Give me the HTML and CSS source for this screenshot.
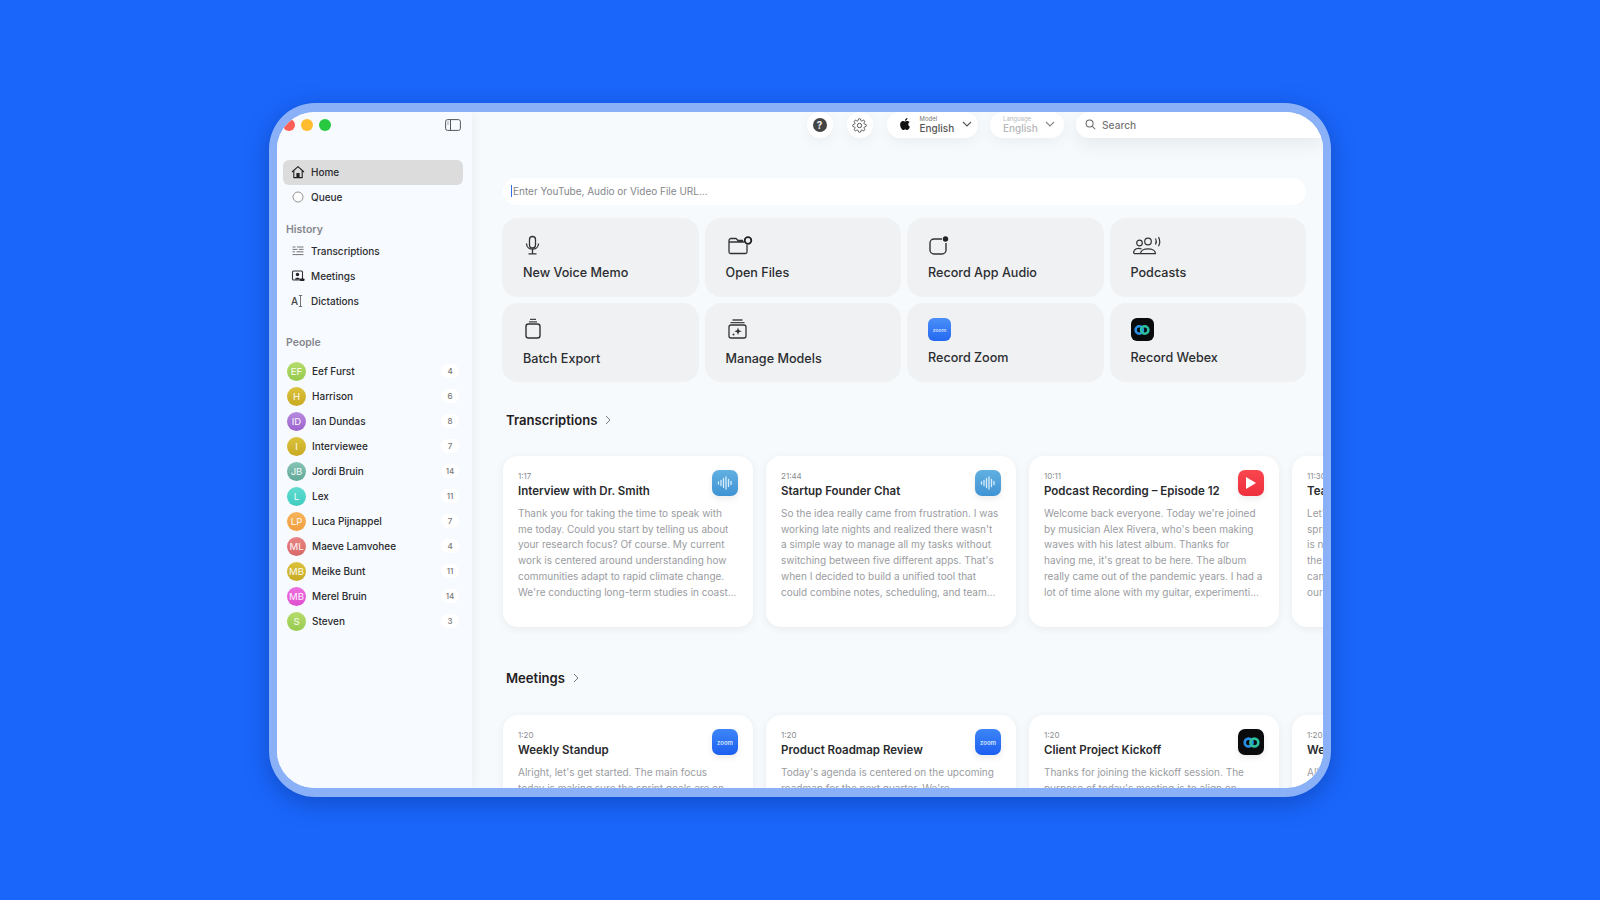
FILE: index.html
```html
<!DOCTYPE html>
<html lang="en">

<head>
    <meta charset="UTF-8" />
    <meta name="viewport" content="width=device-width, initial-scale=1.0" />
    <title>Transcriptions</title>
    <link rel="stylesheet" href="styles.css">
</head>

<body>
    <div class="window">
        <aside class="sidebar">
            <div class="titlebar">
                <span class="light light-red"></span>
                <span class="light light-yellow"></span>
                <span class="light light-green"></span>
                <svg class="toggle" viewBox="0 0 16 12" width="16" height="12"><rect x=".6" y=".6" width="14.8" height="10.8" rx="2" fill="none" stroke="#555" stroke-width="1"/><path d="M5.5 .6v10.8" stroke="#555"/><path d="M2.2 3h1.6M2.2 5h1.6" stroke="#777" stroke-width=".8"/></svg>
            </div>

            <a class="nav-row active">
                <svg class="nav-icon" viewBox="0 0 14 14"><path d="M1 7 7 1.6 13 7M2.8 5.8V12.6h8.4V5.8" fill="none" stroke="#222" stroke-width="1.1" stroke-linejoin="round"/><rect x="5.4" y="8" width="3.2" height="4.6" fill="#222"/></svg>
                Home
            </a>
            <a class="nav-row">
                <svg class="nav-icon" viewBox="0 0 14 14"><circle cx="7" cy="7" r="5" fill="#fff" stroke="#888" stroke-width=".9"/></svg>
                Queue
            </a>

            <h4 class="side-heading history-heading">History</h4>
            <a class="nav-row">
                <svg class="nav-icon" viewBox="0 0 14 14"><path d="M1.5 3h3M6 3h6.5M1.5 5.4h5M8 5.4h4.500M1.500 7.800h2.500M5.500 7.800h7M1.500 10.600h11" fill="none" stroke="#666" stroke-width=".9"/></svg>
                Transcriptions
            </a>
            <a class="nav-row">
                <svg class="nav-icon" viewBox="0 0 14 14"><rect x="1.500" y="2" width="10" height="9" rx="1" fill="none" stroke="#333" stroke-width="1.100"/><circle cx="6.500" cy="5.500" r="1.700" fill="#222"/><path d="M3.800 10.500c.3-2.300 5-2.300 5.400 0z" fill="#222"/><rect x="9" y="9.500" width="4.500" height="2.500" rx=".8" fill="#222"/></svg>
                Meetings
            </a>
            <a class="nav-row">
                <span class="nav-icon dict-icon"><span>A</span><svg viewBox="0 0 5 14" width="5" height="14"><path d="M.8 1.500h3.400M2.500 1.500v11M.8 12.500h3.400" fill="none" stroke="#555" stroke-width=".8"/></svg></span>
                Dictations
            </a>

            <h4 class="side-heading people-heading">People</h4>
            <ul class="people">
                <li><span class="avatar av-lime">EF</span><span class="person">Eef Furst</span><span class="count">4</span></li>
                <li><span class="avatar av-mustard">H</span><span class="person">Harrison</span><span class="count">6</span></li>
                <li><span class="avatar av-purple">ID</span><span class="person">Ian Dundas</span><span class="count">8</span></li>
                <li><span class="avatar av-mustard">I</span><span class="person">Interviewee</span><span class="count">7</span></li>
                <li><span class="avatar av-sage">JB</span><span class="person">Jordi Bruin</span><span class="count">14</span></li>
                <li><span class="avatar av-teal">L</span><span class="person">Lex</span><span class="count">11</span></li>
                <li><span class="avatar av-orange">LP</span><span class="person">Luca Pijnappel</span><span class="count">7</span></li>
                <li><span class="avatar av-red">ML</span><span class="person">Maeve Lamvohee</span><span class="count">4</span></li>
                <li><span class="avatar av-mustard">MB</span><span class="person">Meike Bunt</span><span class="count">11</span></li>
                <li><span class="avatar av-pink">MB</span><span class="person">Merel Bruin</span><span class="count">14</span></li>
                <li><span class="avatar av-lime">S</span><span class="person">Steven</span><span class="count">3</span></li>
            </ul>
        </aside>

        <main class="content">
            <div class="topbar">
                <div class="round-btn"><span class="help">?</span></div>
                <div class="round-btn">
                    <svg viewBox="0 0 24 24" width="15" height="15" fill="none" stroke="#555" stroke-width="1.600"><circle cx="12" cy="12" r="3.500"/><path d="M19.400 15a1.650 1.650 0 0 0 .33 1.820l.06.06a2 2 0 0 1 0 2.830 2 2 0 0 1-2.830 0l-.06-.06a1.650 1.650 0 0 0-1.820-.33 1.650 1.650 0 0 0-1 1.510V21a2 2 0 0 1-2 2 2 2 0 0 1-2-2v-.09A1.650 1.650 0 0 0 9 19.400a1.650 1.650 0 0 0-1.820.33l-.06.06a2 2 0 0 1-2.830 0 2 2 0 0 1 0-2.830l.06-.06a1.650 1.650 0 0 0 .33-1.820 1.650 1.650 0 0 0-1.510-1H3a2 2 0 0 1-2-2 2 2 0 0 1 2-2h.09A1.650 1.650 0 0 0 4.600 9a1.650 1.650 0 0 0-.33-1.820l-.06-.06a2 2 0 0 1 0-2.830 2 2 0 0 1 2.830 0l.06.06a1.650 1.650 0 0 0 1.820.33H9a1.650 1.650 0 0 0 1-1.510V3a2 2 0 0 1 2-2 2 2 0 0 1 2 2v.09a1.650 1.650 0 0 0 1 1.510 1.650 1.650 0 0 0 1.820-.33l.06-.06a2 2 0 0 1 2.830 0 2 2 0 0 1 0 2.830l-.06.06a1.650 1.650 0 0 0-.33 1.820V9a1.650 1.650 0 0 0 1.510 1H21a2 2 0 0 1 2 2 2 2 0 0 1-2 2h-.09a1.650 1.650 0 0 0-1.510 1z"/></svg>
                </div>
                <div class="picker model-picker">
                    <svg class="apple" viewBox="0 0 24 24" width="12" height="12"><path fill="#111" d="M12.152 6.896c-.948 0-2.415-1.078-3.960-1.040-2.040.027-3.910 1.183-4.961 3.014-2.117 3.675-.546 9.103 1.519 12.090 1.013 1.454 2.208 3.090 3.792 3.039 1.520-.065 2.090-.987 3.935-.987 1.831 0 2.350.987 3.960.948 1.637-.026 2.676-1.480 3.676-2.948 1.156-1.688 1.636-3.325 1.662-3.415-.039-.013-3.182-1.221-3.220-4.857-.026-3.040 2.480-4.494 2.597-4.559-1.429-2.090-3.623-2.324-4.390-2.376-2-.156-3.675 1.090-4.610 1.090zM15.530 3.830c.843-1.012 1.400-2.427 1.245-3.830-1.207.052-2.662.805-3.532 1.818-.780.896-1.454 2.338-1.273 3.714 1.338.104 2.715-.688 3.559-1.701"/></svg>
                    <div class="picker-text"><small>Model</small><b>English</b></div>
                    <svg class="caret-down" viewBox="0 0 10 6" width="10" height="6"><path d="M1 1l4 4 4-4" fill="none" stroke="#555" stroke-width="1.100"/></svg>
                </div>
                <div class="picker lang-picker">
                    <div class="picker-text"><small>Language</small><b>English</b></div>
                    <svg class="caret-down" viewBox="0 0 10 6" width="10" height="6"><path d="M1 1l4 4 4-4" fill="none" stroke="#888" stroke-width="1.100"/></svg>
                </div>
                <div class="search">
                    <svg viewBox="0 0 12 12" width="11" height="11"><circle cx="5" cy="5" r="3.800" fill="none" stroke="#666" stroke-width="1.100"/><path d="M8 8l3.200 3.200" stroke="#666" stroke-width="1.100"/></svg>
                    Search
                </div>
            </div>

            <div class="url-box"><span class="text-cursor"></span>Enter YouTube, Audio or Video File URL...</div>

            <div class="tiles">
                <div class="tile">
                    <svg class="tile-icon" viewBox="0 0 32 24"><rect x="6.500" y="3.500" width="6" height="11.500" rx="3" fill="none" stroke="#333" stroke-width="1.300"/><path d="M3.500 10.500c0 7.500 12 7.500 12 0M9.500 16.500v4M5.500 20.800h8" fill="none" stroke="#333" stroke-width="1.300"/></svg>
                    <span>New Voice Memo</span>
                </div>
                <div class="tile">
                    <svg class="tile-icon" viewBox="0 0 32 24"><path d="M18 9H3v-1.500a2 2 0 0 1 2-2h5l2 2h5M3 8v11a1.500 1.500 0 0 0 1.500 1.500h15a1.500 1.500 0 0 0 1.500-1.500v-7" fill="none" stroke="#333" stroke-width="1.300"/><circle cx="22" cy="7.500" r="3.300" fill="none" stroke="#222" stroke-width="1.800"/></svg>
                    <span>Open Files</span>
                </div>
                <div class="tile">
                    <svg class="tile-icon" viewBox="0 0 32 24"><path d="M14 6H6a4 4 0 0 0-4 4v7a4 4 0 0 0 4 4h8a4 4 0 0 0 4-4v-7" fill="none" stroke="#333" stroke-width="1.400"/><circle cx="17.500" cy="6" r="2.700" fill="#222"/></svg>
                    <span>Record App Audio</span>
                </div>
                <div class="tile">
                    <svg class="tile-icon" viewBox="0 0 32 24"><circle cx="8.500" cy="10" r="2.800" fill="none" stroke="#333" stroke-width="1.200"/><path d="M2.500 20.500c0-5 5-6 8-4.500M3 20.700h6" fill="none" stroke="#333" stroke-width="1.200"/><circle cx="17" cy="8.500" r="3.300" fill="none" stroke="#333" stroke-width="1.200"/><path d="M9.500 20.700c0-6.500 15-6.500 15 0z" fill="none" stroke="#333" stroke-width="1.200"/><path d="M24.500 5.500c1 1.800 1 4.200 0 6M27.500 4c1.500 2.800 1.500 6.500 0 9.300" fill="none" stroke="#333" stroke-width="1.200"/></svg>
                    <span>Podcasts</span>
                </div>
                <div class="tile tile-low">
                    <svg class="tile-icon" viewBox="0 0 32 24"><rect x="3" y="6" width="14" height="14" rx="2.500" fill="none" stroke="#333" stroke-width="1.400"/><path d="M6 3.800h8M7 1.300h6" stroke="#444" stroke-width="1.300"/></svg>
                    <span>Batch Export</span>
                </div>
                <div class="tile tile-low">
                    <svg class="tile-icon" viewBox="0 0 32 24"><rect x="3" y="7" width="17" height="13" rx="2" fill="none" stroke="#333" stroke-width="1.300"/><path d="M4.500 4.700h14M6.500 2h10" stroke="#444" stroke-width="1.300"/><path d="M12 9.500l1 2.700 2.700 1-2.700 1-1 2.700-1-2.700-2.700-1 2.700-1z" fill="#333"/><circle cx="7.500" cy="16.500" r="1" fill="#333"/></svg>
                    <span>Manage Models</span>
                </div>
                <div class="tile tile-app">
                    <div class="app-icon app-zoom"><span>zoom</span></div>
                    <span>Record Zoom</span>
                </div>
                <div class="tile tile-app">
                    <div class="app-icon app-webex">
                        <svg viewBox="0 0 16 12" width="16" height="12"><circle cx="5.300" cy="6" r="3.700" fill="none" stroke="#2a8fe4" stroke-width="2.500"/><circle cx="10.700" cy="6" r="3.700" fill="none" stroke="#2cc0a0" stroke-width="2.500"/></svg>
                    </div>
                    <span>Record Webex</span>
                </div>
            </div>

            <div class="section-title first"><span>Transcriptions</span><svg viewBox="0 0 6 10" width="6" height="10"><path d="M1 1l4 4-4 4" fill="none" stroke="#777" stroke-width="1"/></svg></div>
            <div class="cards">
                <article class="card">
                    <div class="card-badge badge-wave"><svg viewBox="0 0 16 14" width="16" height="14"><path d="M1.500 6v2M4 4.500v5M6.500 2.500v9M9 1v12M11.500 3.500v7M14 5.500v3" stroke="#d9eefa" stroke-width="1.300" stroke-linecap="round"/></svg></div>
                    <time>1:17</time>
                    <h5>Interview with Dr. Smith</h5>
                    <p>Thank you for taking the time to speak with me today. Could you start by telling us about your research focus? Of course. My current work is centered around understanding how communities adapt to rapid climate change. We're conducting long-term studies in coastal regions across three different countries right now.</p>
                </article>
                <article class="card">
                    <div class="card-badge badge-wave"><svg viewBox="0 0 16 14" width="16" height="14"><path d="M1.500 6v2M4 4.500v5M6.500 2.500v9M9 1v12M11.500 3.500v7M14 5.500v3" stroke="#d9eefa" stroke-width="1.300" stroke-linecap="round"/></svg></div>
                    <time>21:44</time>
                    <h5>Startup Founder Chat</h5>
                    <p>So the idea really came from frustration. I was working late nights and realized there wasn't a simple way to manage all my tasks without switching between five different apps. That's when I decided to build a unified tool that could combine notes, scheduling, and team communication in a single place for everyone.</p>
                </article>
                <article class="card">
                    <div class="card-badge badge-play"><svg viewBox="0 0 12 14" width="12" height="14"><path d="M1 1l10 6-10 6z" fill="#fff"/></svg></div>
                    <time>10:11</time>
                    <h5>Podcast Recording – Episode 12</h5>
                    <p>Welcome back everyone. Today we're joined by musician Alex Rivera, who's been making waves with his latest album. Thanks for having me, it's great to be here. The album really came out of the pandemic years. I had a lot of time alone with my guitar, experimenting with sounds I never tried before that.</p>
                </article>
                <article class="card">
                    <time>11:30</time>
                    <h5>Team Sync</h5>
                    <p>Let's go over where we are on this week's<br>sprint. The main thing to watch this week<br>is now the release, so we need to make sure<br>the last tasks are done before Friday. If you<br>can, please share an update in the channel<br>our team uses for launch planning today.</p>
                </article>
            </div>

            <div class="section-title"><span>Meetings</span><svg viewBox="0 0 6 10" width="6" height="10"><path d="M1 1l4 4-4 4" fill="none" stroke="#777" stroke-width="1"/></svg></div>
            <div class="cards">
                <article class="card">
                    <div class="card-badge badge-zoom"><span>zoom</span></div>
                    <time>1:20</time>
                    <h5>Weekly Standup</h5>
                    <p>Alright, let's get started. The main focus<br>today is making sure the sprint goals are on schedule for the release next week.</p>
                </article>
                <article class="card">
                    <div class="card-badge badge-zoom"><span>zoom</span></div>
                    <time>1:20</time>
                    <h5>Product Roadmap Review</h5>
                    <p>Today's agenda is centered on the upcoming roadmap for the next quarter. We're prioritizing three main areas.</p>
                </article>
                <article class="card">
                    <div class="card-badge badge-webex"><svg viewBox="0 0 16 12" width="17" height="13"><circle cx="5.300" cy="6" r="3.700" fill="none" stroke="#2a8fe4" stroke-width="2.500"/><circle cx="10.700" cy="6" r="3.700" fill="none" stroke="#2cc0a0" stroke-width="2.500"/></svg></div>
                    <time>1:20</time>
                    <h5>Client Project Kickoff</h5>
                    <p>Thanks for joining the kickoff session. The purpose of today's meeting is to align on deliverables and the timeline.</p>
                </article>
                <article class="card">
                    <time>1:20</time>
                    <h5>Weekly Sync</h5>
                    <p>All right, let's begin with a short review of the work from this week.</p>
                </article>
            </div>
        </main>
    </div>
</body>

</html>
```

FILE: styles.css
```css
* {
    box-sizing: border-box;
}

html,
body {
    height: 100%;
}

body {
    margin: 0;
    display: flex;
    align-items: center;
    justify-content: center;
    background: #1a66fb;
    font-family: 'Inter', 'Liberation Sans', sans-serif;
    color: #2a2b2e;
    overflow: hidden;
}

.window {
    width: 1062px;
    height: 694px;
    display: flex;
    border: solid #8ab1f8;
    border-width: 9px 8px;
    border-radius: 46px;
    background: #f7fafc;
    overflow: hidden;
    box-shadow: 0 6px 24px rgba(8, 40, 120, 0.4);
}

/* ---------- sidebar ---------- */

.sidebar {
    width: 195px;
    flex-shrink: 0;
    padding: 7px 9px 0 6px;
    background: #f7fafe;
    box-shadow: 2px 0 10px rgba(0, 0, 0, 0.05);
    z-index: 1;
}

.titlebar {
    height: 12px;
    margin-bottom: 28.5px;
    display: flex;
    align-items: center;
    gap: 6px;
}

.light {
    width: 12px;
    height: 12px;
    border-radius: 50%;
}

.light-red {
    background: #ff5f57;
}

.light-yellow {
    background: #febc2e;
}

.light-green {
    background: #28c840;
}

.toggle {
    margin-left: auto;
    margin-right: 2px;
}

.nav-row {
    height: 25px;
    padding-left: 8px;
    display: flex;
    align-items: center;
    gap: 6px;
    border-radius: 6px;
    font-size: 10px;
    font-weight: 500;
    color: #2c2d30;
}

.nav-row.active {
    background: #dcdcdc;
}

.nav-icon {
    width: 14px;
    height: 14px;
    flex-shrink: 0;
}

.dict-icon {
    display: flex;
    align-items: center;
    font-size: 10px;
    color: #444;
}

.side-heading {
    height: 16px;
    margin: 0;
    padding-left: 3px;
    font-size: 10.5px;
    line-height: 16px;
    font-weight: 600;
    color: #85878c;
}

.history-heading {
    margin-top: 12.5px;
}

.people-heading {
    margin-top: 21.5px;
}

.people {
    list-style: none;
    margin: 8px 0 0;
    padding: 0;
}

.people li {
    height: 25px;
    padding-left: 4px;
    display: flex;
    align-items: center;
    font-size: 10px;
    font-weight: 500;
}

.avatar {
    width: 19px;
    height: 19px;
    margin-right: 6px;
    border-radius: 50%;
    display: flex;
    align-items: center;
    justify-content: center;
    font-size: 9.5px;
    color: rgba(255, 255, 255, 0.85);
}

.av-lime {
    background: linear-gradient(#b6dc6c, #96ca4e);
}

.av-mustard {
    background: linear-gradient(#dcc23c, #c8aa22);
}

.av-purple {
    background: linear-gradient(#b88be0, #9a62cc);
}

.av-sage {
    background: linear-gradient(#86c4b4, #62a898);
}

.av-teal {
    background: linear-gradient(#60dcd0, #40ccc0);
}

.av-orange {
    background: linear-gradient(#f6b45c, #f09e40);
}

.av-red {
    background: linear-gradient(#e88484, #d86868);
}

.av-pink {
    background: linear-gradient(#ee70e0, #de4ece);
}

.person {
    flex: 1;
}

.count {
    width: 18px;
    margin-right: 4px;
    border-radius: 8px;
    background: #fff;
    text-align: center;
    font-size: 8px;
    line-height: 14px;
    color: #777;
}

/* ---------- main area ---------- */

.content {
    flex: 1;
    min-width: 0;
    padding: 0 17px 0 30px;
    background: #f7fafc;
    overflow: hidden;
}

.topbar {
    height: 26px;
    margin-right: -17px;
    display: flex;
    justify-content: flex-end;
    gap: 14px;
}

.round-btn {
    width: 26px;
    height: 26px;
    border-radius: 50%;
    background: #fff;
    display: flex;
    align-items: center;
    justify-content: center;
    box-shadow: 0 4px 14px rgba(0, 0, 0, 0.05);
}

.help {
    width: 14px;
    height: 14px;
    border-radius: 50%;
    background: #444;
    color: #eee;
    font-size: 10px;
    font-weight: 700;
    line-height: 14px;
    text-align: center;
}

.picker {
    height: 26px;
    padding-bottom: 2px;
    border-radius: 13px;
    background: #fff;
    display: flex;
    align-items: center;
    box-shadow: 0 4px 14px rgba(0, 0, 0, 0.05);
}

.model-picker {
    width: 91.5px;
    padding-left: 12px;
}

.lang-picker {
    width: 74px;
    padding-left: 13px;
    margin-left: -2px;
}

.apple {
    margin-right: 9px;
}

.picker-text {
    display: flex;
    flex-direction: column;
    width: 38px;
}

.picker-text small {
    font-size: 6px;
    line-height: 7px;
    color: #777;
}

.picker-text b {
    font-size: 10px;
    line-height: 12px;
    font-weight: 500;
    color: #555;
}

.lang-picker .picker-text small,
.lang-picker .picker-text b {
    color: #b5b7ba;
}

.caret-down {
    margin-left: 4px;
}

.search {
    width: 247px;
    margin-left: -2px;
    padding-left: 9px;
    padding-bottom: 1px;
    display: flex;
    align-items: center;
    gap: 6px;
    border-radius: 13px 0 0 13px;
    background: #fff;
    font-size: 10.2px;
    font-weight: 500;
    color: #777;
    box-shadow: 0 6px 20px rgba(0, 0, 0, 0.07);
}

.url-box {
    height: 27px;
    margin: 39.5px 0 13.5px 1px;
    padding-left: 7.5px;
    display: flex;
    align-items: center;
    border-radius: 14px;
    background: #ffffff;
    font-size: 10px;
    color: #85878c;
}

.text-cursor {
    width: 1.5px;
    height: 12px;
    margin-right: 1px;
    background: #2f6fec;
}

.tiles {
    display: grid;
    grid-template-columns: repeat(4, 1fr);
    grid-auto-rows: 79px;
    gap: 6px;
}

.tile {
    padding: 15px 0 0 21px;
    border-radius: 16px;
    background: #eff1f3;
    font-size: 12.6px;
    font-weight: 500;
    color: #2c2d30;
}

.tile span {
    display: block;
    height: 16px;
    line-height: 16px;
}

.tile-icon {
    display: block;
    width: 32px;
    height: 24px;
    margin-bottom: 8px;
}

.tile-low .tile-icon {
    margin-bottom: 9px;
}

.app-icon {
    width: 23px;
    height: 23px;
    margin-bottom: 9px;
    border-radius: 6px;
    display: flex;
    align-items: center;
    justify-content: center;
}

.app-zoom {
    background: linear-gradient(#4a8ff8, #2468f2);
}

.tile .app-zoom span {
    font-size: 5px;
    font-weight: 600;
    color: #cfe0ff;
}

.app-webex {
    background: #0a0b0d;
}

.section-title {
    height: 20px;
    margin: 41px 0 27px 4px;
    display: flex;
    align-items: center;
    gap: 8px;
    font-size: 13.1px;
    font-weight: 600;
    color: #1f2023;
}

.section-title.first {
    margin-top: 28px;
    margin-bottom: 26px;
}

.cards {
    display: flex;
    gap: 13px;
    margin-left: 1px;
}

.card {
    position: relative;
    width: 250px;
    height: 171px;
    flex-shrink: 0;
    padding: 14px 16.5px 0 15px;
    border-radius: 15px;
    background: #fff;
    box-shadow: 0 2px 8px rgba(30, 50, 80, 0.07);
}

.card time {
    display: block;
    height: 12px;
    font-size: 8px;
    line-height: 12px;
    color: #8b8d92;
}

.card h5 {
    margin: 1px 0 7px;
    font-size: 11.5px;
    line-height: 16px;
    font-weight: 600;
    color: #2a2b2e;
    white-space: nowrap;
}

.card p {
    margin: 0;
    font-size: 10px;
    line-height: 15.7px;
    color: #9a9ca1;
    display: -webkit-box;
    -webkit-box-orient: vertical;
    -webkit-line-clamp: 6;
    overflow: hidden;
}

/* sits over the card corner */
.card-badge {
    position: absolute;
    top: 14px;
    right: 15px;
    width: 26px;
    height: 26px;
    border-radius: 7px;
    display: flex;
    align-items: center;
    justify-content: center;
    box-shadow: 0 3px 6px rgba(0, 0, 0, 0.08);
}

.badge-wave {
    background: linear-gradient(#62b0e2, #3f93d4);
}

.badge-play {
    background: linear-gradient(#f9474f, #ee2e3c);
}

.badge-zoom {
    background: linear-gradient(#3d86f8, #1c5ff0);
    font-size: 6px;
    font-weight: 600;
    color: #d5e4ff;
}

.badge-webex {
    background: #0a0b0d;
}
```
